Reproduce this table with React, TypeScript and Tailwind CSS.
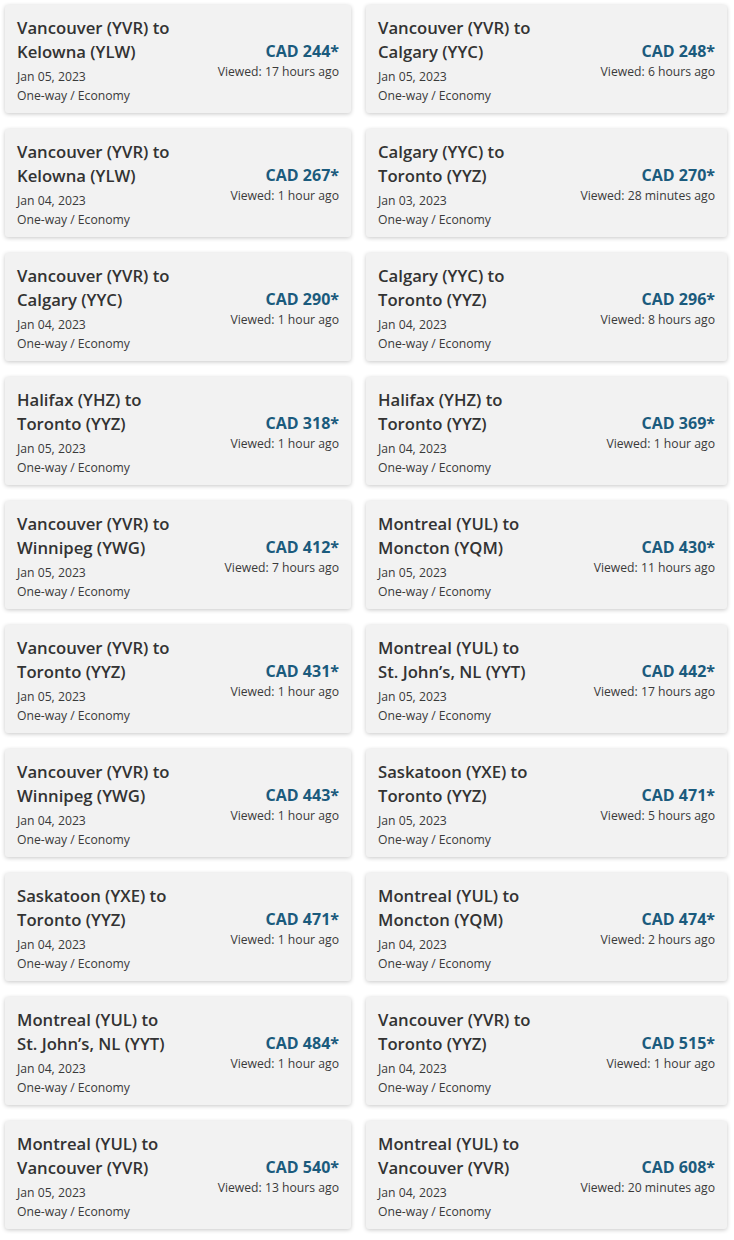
import React from "react";

type Item = { from: string; to: string; price: number; date: string; viewed: string };

const items: Item[] = [
  { from: "Vancouver (YVR) to", to: "Kelowna (YLW)", price: 244, date: "Jan 05, 2023", viewed: "17 hours ago" },
  { from: "Vancouver (YVR) to", to: "Calgary (YYC)", price: 248, date: "Jan 05, 2023", viewed: "6 hours ago" },
  { from: "Vancouver (YVR) to", to: "Kelowna (YLW)", price: 267, date: "Jan 04, 2023", viewed: "1 hour ago" },
  { from: "Calgary (YYC) to", to: "Toronto (YYZ)", price: 270, date: "Jan 03, 2023", viewed: "28 minutes ago" },
  { from: "Vancouver (YVR) to", to: "Calgary (YYC)", price: 290, date: "Jan 04, 2023", viewed: "1 hour ago" },
  { from: "Calgary (YYC) to", to: "Toronto (YYZ)", price: 296, date: "Jan 04, 2023", viewed: "8 hours ago" },
  { from: "Halifax (YHZ) to", to: "Toronto (YYZ)", price: 318, date: "Jan 05, 2023", viewed: "1 hour ago" },
  { from: "Halifax (YHZ) to", to: "Toronto (YYZ)", price: 369, date: "Jan 04, 2023", viewed: "1 hour ago" },
  { from: "Vancouver (YVR) to", to: "Winnipeg (YWG)", price: 412, date: "Jan 05, 2023", viewed: "7 hours ago" },
  { from: "Montreal (YUL) to", to: "Moncton (YQM)", price: 430, date: "Jan 05, 2023", viewed: "11 hours ago" },
  { from: "Vancouver (YVR) to", to: "Toronto (YYZ)", price: 431, date: "Jan 05, 2023", viewed: "1 hour ago" },
  { from: "Montreal (YUL) to", to: "St. John’s, NL (YYT)", price: 442, date: "Jan 05, 2023", viewed: "17 hours ago" },
  { from: "Vancouver (YVR) to", to: "Winnipeg (YWG)", price: 443, date: "Jan 04, 2023", viewed: "1 hour ago" },
  { from: "Saskatoon (YXE) to", to: "Toronto (YYZ)", price: 471, date: "Jan 05, 2023", viewed: "5 hours ago" },
  { from: "Saskatoon (YXE) to", to: "Toronto (YYZ)", price: 471, date: "Jan 04, 2023", viewed: "1 hour ago" },
  { from: "Montreal (YUL) to", to: "Moncton (YQM)", price: 474, date: "Jan 04, 2023", viewed: "2 hours ago" },
  { from: "Montreal (YUL) to", to: "St. John’s, NL (YYT)", price: 484, date: "Jan 04, 2023", viewed: "1 hour ago" },
  { from: "Vancouver (YVR) to", to: "Toronto (YYZ)", price: 515, date: "Jan 04, 2023", viewed: "1 hour ago" },
  { from: "Montreal (YUL) to", to: "Vancouver (YVR)", price: 540, date: "Jan 05, 2023", viewed: "13 hours ago" },
  { from: "Montreal (YUL) to", to: "Vancouver (YVR)", price: 608, date: "Jan 04, 2023", viewed: "20 minutes ago" },
];

function Card({ item }: { item: Item }) {
  return (
    <div className="flex h-[108px] items-center justify-between rounded-[3px] bg-[#f2f2f2] pl-3 pr-3 shadow-[0_1px_4px_rgba(0,0,0,0.22)]">
      <div className="flex flex-col self-start pt-[11px]">
        <div className="text-[16.7px] font-semibold leading-[24px] text-[#333333]">{item.from}</div>
        <div className="text-[16.7px] font-semibold leading-[24px] text-[#333333]">{item.to}</div>
        <div className="mt-[3px] text-[12.2px] leading-[19px] text-[#3a3a3a]">{item.date}</div>
        <div className="text-[12.2px] leading-[19px] text-[#3a3a3a]">One-way / Economy</div>
      </div>
      <div className="flex flex-col items-end pt-[2px]">
        <div className="text-[16px] font-bold leading-[22px] text-[#1b5b7d]">CAD {item.price}*</div>
        <div className="text-[12.2px] leading-[19px] text-[#3a3a3a]">Viewed: {item.viewed}</div>
      </div>
    </div>
  );
}

export default function App() {
  return (
    <div className="min-h-[1240px] w-[734px] bg-white pl-[5px] pt-[5px]" style={{ fontFamily: '"Open Sans", sans-serif' }}>
      <div className="grid grid-cols-[346px_361px] gap-x-[15px] gap-y-[16px]">
        {items.map((it, i) => (
          <Card key={i} item={it} />
        ))}
      </div>
    </div>
  );
}
